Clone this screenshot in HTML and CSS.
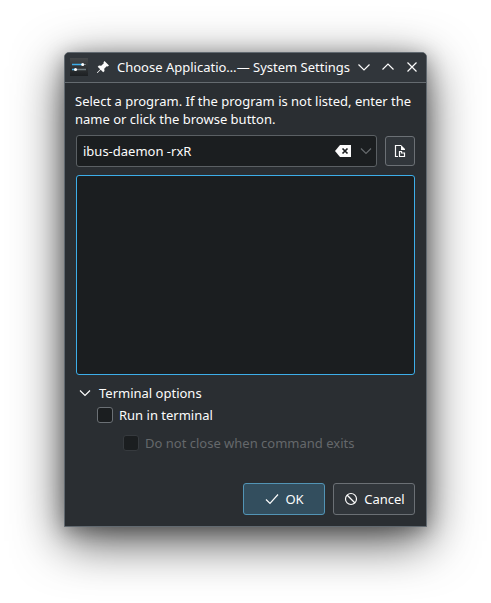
FILE: index.html
```html
<!DOCTYPE html>
<html lang="en">
<head>
<meta charset="utf-8">
<title>Choose Application — System Settings</title>
<link rel="stylesheet" href="styles.css">
</head>
<body>
<main class="dialog">
  <header class="titlebar">
    <svg class="app-icon" viewBox="0 0 18 18" aria-hidden="true">
      <defs><linearGradient id="tile" x1="0" y1="0" x2="0" y2="1"><stop offset="0" stop-color="#444749"/><stop offset="1" stop-color="#1d2023"/></linearGradient></defs>
      <rect width="18" height="18" fill="url(#tile)"/>
      <path d="M2 6.500h10" stroke="#3daee9" stroke-width="1.400"/><path d="M13 6.500h3" stroke="#6f7b80"/>
      <path d="M2 11.500h3" stroke="#3daee9" stroke-width="1.400"/><path d="M6 11.500h10" stroke="#6f7b80" stroke-width="1.400"/>
      <circle cx="12.700" cy="6.500" r="1.500" fill="#fff"/><circle cx="5.500" cy="11.500" r="1.500" fill="#fff"/>
    </svg>
    <button class="icon-button" type="button" aria-label="Pin">
      <svg class="icon" viewBox="0 0 16 16"><path d="M9.500 2L14 6.500l-1.300 1-1-.3-2.500 2.600.3 2.200-1.300 1.300-2.500-2.500L2.500 14H2v-.5l3.200-3.200-2.500-2.500L4 6.500l2.200.3 2.600-2.500-.3-1z" fill="#fcfcfc"/></svg>
    </button>
    <h1 class="title">Choose Applicatio…— System Settings</h1>
    <div class="window-controls">
      <button class="icon-button" type="button" aria-label="Minimize"><svg class="icon" viewBox="0 0 16 16"><path class="line" d="M2.500 5.500l5.500 5.500 5.500-5.500"/></svg></button>
      <button class="icon-button" type="button" aria-label="Maximize"><svg class="icon" viewBox="0 0 16 16"><path class="line" d="M2.500 10.500L8 5l5.500 5.500"/></svg></button>
      <button class="icon-button" type="button" aria-label="Close"><svg class="icon" viewBox="0 0 16 16"><path class="line" d="M3.500 3.500l9 9m0-9l-9 9"/></svg></button>
    </div>
  </header>
  <form class="content">
    <label class="prompt" for="program">Select a program. If the program is not listed, enter the name or click the browse button.</label>
    <div class="program-row">
      <div class="combo">
        <input class="combo-input" id="program" type="text" value="ibus-daemon -rxR">
        <button class="icon-button" type="button" aria-label="Clear"><svg class="icon" viewBox="0 0 16 16"><path d="M0 8l5-6h11v12H5z" fill="#fcfcfc"/><path d="M7.500 5.500l5 5m0-5l-5 5" stroke="#1b1e20" stroke-width="1.700"/></svg></button>
        <button class="icon-button dim" type="button" aria-label="Show history"><svg class="icon" viewBox="0 0 16 16"><path class="line" d="M3 5.500l5 5 5-5"/></svg></button>
      </div>
      <button class="browse" type="button" aria-label="Browse"><svg class="icon" viewBox="0 0 16 16"><path class="line" d="M6 13.500H3.500v-11H9"/><path d="M9 2l4 4v1H9z" fill="#fcfcfc"/><path class="line" d="M7.500 13.500v-5h2v1.500h3v3.500z"/></svg></button>
    </div>
    <div class="program-list" role="listbox" aria-label="Programs" tabindex="0"></div>
    <button class="expander" type="button" aria-expanded="true"><svg class="icon" viewBox="0 0 16 16"><path class="line" d="M3 5.500l5 5 5-5"/></svg>Terminal options</button>
    <label class="check"><input class="check-box" type="checkbox">Run in terminal</label>
    <label class="check nested"><input class="check-box" type="checkbox" disabled>Do not close when command exits</label>
    <footer class="actions">
      <button class="action primary" type="submit"><svg class="icon" viewBox="0 0 16 16"><path class="line" d="M2 8.500l4 4 8-9"/></svg>OK</button>
      <button class="action" type="button"><svg class="icon" viewBox="0 0 16 16"><circle class="line" cx="8" cy="8" r="5.500"/><path class="line" d="M4 4l8 8"/></svg>Cancel</button>
    </footer>
  </form>
</main>
</body>
</html>
```
FILE: styles.css
```css
* { box-sizing: border-box; }
body {
  margin: 0;
  padding: 52px 64px 76px;
  background: #fff;
  color: #fcfcfc;
  font: 13px/18px "Noto Sans", sans-serif;
}
button, input { font: inherit; color: inherit; }
button { display: flex; align-items: center; justify-content: center; margin: 0; padding: 0; border: 0; background: none; }
.icon { display: block; flex: none; width: 16px; height: 16px; }
.line { fill: none; stroke: currentColor; stroke-width: 1.2; }
.dialog {
  overflow: hidden;
  border: 1px solid #616970;
  border-radius: 5px 5px 0 0;
  background: #2a2e32;
  box-shadow: 0 14px 50px rgba(0, 0, 0, .7), 0 4px 20px rgba(0, 0, 0, .3);
}
.titlebar {
  display: flex;
  align-items: center;
  height: 30px;
  padding: 0 6px 1px 5px;
  border-bottom: 1px solid #656b70;
  background: #31363b;
}
.app-icon { flex: none; width: 18px; height: 18px; margin-right: 7px; }
.title { flex: 1; margin: 0 0 0 6px; overflow: hidden; font-size: 13px; font-weight: 400; white-space: nowrap; }
.window-controls { display: flex; gap: 8px; }
.content { display: flex; flex-direction: column; padding: 9px 11px 11px; }
.prompt { margin: 0 -1px 7px; }
.program-row { display: flex; align-items: center; gap: 8px; margin-bottom: 8px; }
.combo {
  display: flex;
  flex: 1;
  align-items: center;
  gap: 7px;
  height: 32px;
  min-width: 0;
  padding: 0 2px 0 6px;
  border: 1px solid #5b6064;
  border-radius: 3px;
  background: #1b1e20;
}
.combo-input { flex: 1; min-width: 0; padding: 0; border: 0; outline: 0; background: none; }
.dim { color: #666a6d; }
.browse { width: 30px; height: 30px; border: 1px solid #6b7075; border-radius: 3px; background: #31363b; }
.program-list { height: 200px; border: 1px solid #3daee9; border-radius: 3px; background: #1b1e20; }
.expander { align-self: flex-start; gap: 6px; margin: 9px 0 4px 1px; }
.check { display: flex; align-items: center; gap: 6px; margin-left: 21px; }
.check-box { appearance: none; width: 16px; height: 16px; margin: 0; border: 1px solid #6b7075; border-radius: 3px; background: #1b1e20; }
.nested { margin: 10px 0 0 47px; color: #65686b; }
.nested .check-box { border-color: #363a3e; }
.actions { display: flex; justify-content: flex-end; gap: 8px; margin-top: 31px; }
.action { gap: 5px; width: 82px; height: 32px; border: 1px solid #6b7075; border-radius: 3px; background: #31363b; }
.primary { border-color: #5294b5; background: #334e5e; }
```
